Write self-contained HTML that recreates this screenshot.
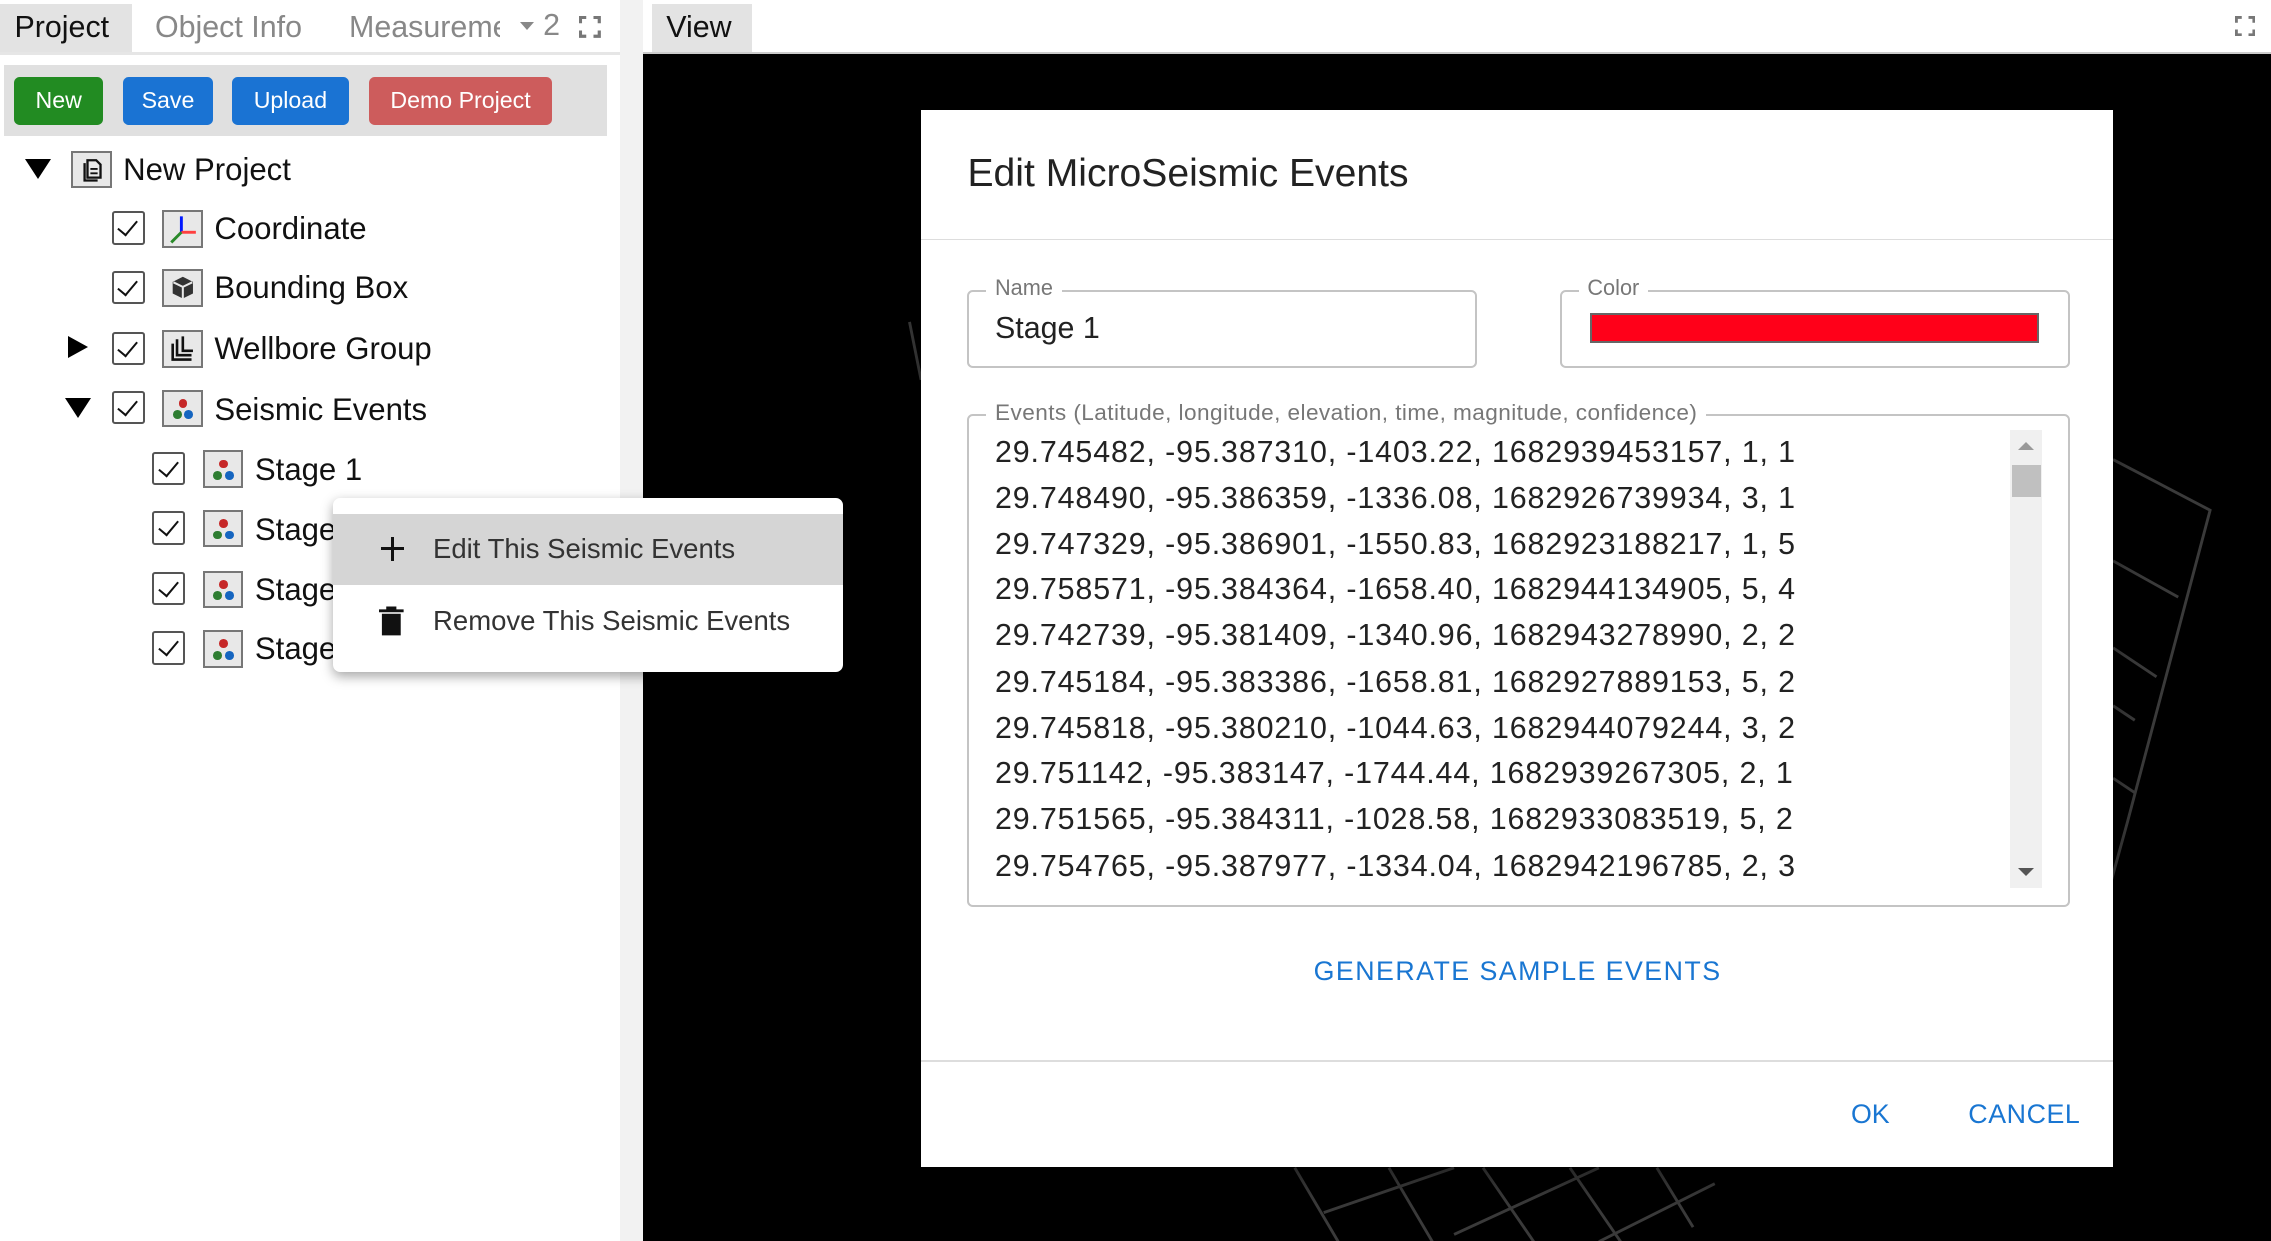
<!DOCTYPE html>
<html><head><meta charset="utf-8"><style>
*{margin:0;padding:0;box-sizing:border-box}
html,body{width:2271px;height:1241px;overflow:hidden;background:#fff}
#r{zoom:1.44834;width:1568px;height:857px;position:relative;font-family:"Liberation Sans",sans-serif;color:#111}
.a{position:absolute}
.tab{position:absolute;top:3px;height:33px;font-size:21px;line-height:33px;padding:0 10px;color:#888}
.btn{position:absolute;top:53px;height:33px;border-radius:4px;color:#fff;font-size:16px;line-height:33px;text-align:center}
.row{position:absolute;height:30px;font-size:21.5px;line-height:30px}
.cb{position:absolute;width:23px;height:23px;border:1.5px solid #555;border-radius:2px;background:#fff}
.cb:after{content:"";position:absolute;left:6px;top:2px;width:6px;height:12px;border:solid #111;border-width:0 1.8px 1.8px 0;transform:rotate(40deg)}
.ic{position:absolute;width:28px;height:26px;border:1.5px solid #777;background:#e8e8e8}
.dots i{position:absolute;width:6px;height:6px;border-radius:50%}
.ev{position:absolute;left:687px;font-size:21px;color:#222;letter-spacing:.6px}
.lbl{position:absolute;font-size:15px;color:#777;background:#fff;padding:0 6px}
.fs{position:absolute;border:1.5px solid #c4c4c4;border-radius:4px}
</style></head><body><div id="r">
<div class="a" style="left:0;top:0;width:428px;height:857px;background:#fff"></div>
<div class="a" style="left:428px;top:0;width:16px;height:857px;background:#f2f2f2"></div>
<div class="a" style="left:0;top:36px;width:428px;height:2px;background:#e6e6e6"></div>
<div class="tab" style="left:0;background:#e3e3e3;color:#111;width:91px">Project</div>
<div class="tab" style="left:97px">Object Info</div>
<div class="tab" style="left:231px;width:114px;overflow:hidden;white-space:nowrap">Measurement</div>
<div class="a" style="left:359px;top:15px;border:5px solid transparent;border-top:6px solid #888"></div>
<div class="a" style="left:375px;top:3px;font-size:21px;line-height:30px;color:#888">2</div>
<svg class="a" style="left:400px;top:11px" width="15" height="15" viewBox="0 0 15 15"><path d="M1 5V1H5M10 1H14V5M14 10V14H10M5 14H1V10" fill="none" stroke="#777" stroke-width="2.2"/></svg>
<div class="a" style="left:3px;top:45px;width:416px;height:49px;background:#e0e0e0"></div>
<div class="btn" style="left:10px;width:61px;background:#228b22">New</div>
<div class="btn" style="left:85px;width:62px;background:#1a73d3">Save</div>
<div class="btn" style="left:160px;width:81px;background:#1a73d3">Upload</div>
<div class="btn" style="left:255px;width:126px;background:#cd5c5c">Demo Project</div>
<div class="a" style="left:17px;top:110px;border:9px solid transparent;border-top:14px solid #000;border-bottom:0"></div>
<div class="ic" style="left:49px;top:104px"><svg width="26" height="24" viewBox="0 0 26 24"><path d="M10 5h6l3 3v9h-9z M8 7v12h9" fill="none" stroke="#111" stroke-width="1.6"/><path d="M12 11h5M12 14h5" stroke="#111" stroke-width="1.3"/></svg></div>
<div class="row" style="left:85px;top:102px">New Project</div>
<div class="cb" style="left:77px;top:146px"></div>
<div class="ic" style="left:112px;top:145px"><svg width="26" height="24"><path d="M12 3v11" stroke="#0018ff" stroke-width="2"/><path d="M12 14h10" stroke="#ff4040" stroke-width="2"/><path d="M12 14l-7 7" stroke="#2a8a2a" stroke-width="2"/></svg></div>
<div class="row" style="left:148px;top:143px">Coordinate</div>
<div class="cb" style="left:77px;top:187px"></div>
<div class="ic" style="left:112px;top:186px"><svg width="26" height="24"><path d="M13 4l7 3.5v8L13 19l-7-3.5v-8z" fill="#333"/><path d="M6.5 7.8L13 11l6.5-3.2M13 11v8" stroke="#e8e8e8" stroke-width="1.4" fill="none"/></svg></div>
<div class="row" style="left:148px;top:184px">Bounding Box</div>
<div class="a" style="left:47px;top:232px;border:8px solid transparent;border-left:14px solid #000;border-right:0"></div>
<div class="cb" style="left:77px;top:229px"></div>
<div class="ic" style="left:112px;top:228px"><svg width="26" height="24"><path d="M6 8v11h13M9 5v11h10M13 3v10h7" fill="none" stroke="#111" stroke-width="1.8"/></svg></div>
<div class="row" style="left:148px;top:226px">Wellbore Group</div>
<div class="a" style="left:45px;top:275px;border:9px solid transparent;border-top:14px solid #000;border-bottom:0"></div>
<div class="cb" style="left:77px;top:270px"></div>
<div class="ic dots" style="left:112px;top:269px"><i style="left:10px;top:5px;background:#c62828"></i><i style="left:6px;top:13px;background:#2e7d32"></i><i style="left:14px;top:13px;background:#1565c0"></i></div>
<div class="row" style="left:148px;top:268px">Seismic Events</div>
<div class="cb" style="left:105px;top:312px"></div>
<div class="ic dots" style="left:140px;top:311px"><i style="left:10px;top:5px;background:#c62828"></i><i style="left:6px;top:13px;background:#2e7d32"></i><i style="left:14px;top:13px;background:#1565c0"></i></div>
<div class="row" style="left:176px;top:309px">Stage 1</div>
<div class="cb" style="left:105px;top:353px"></div>
<div class="ic dots" style="left:140px;top:352px"><i style="left:10px;top:5px;background:#c62828"></i><i style="left:6px;top:13px;background:#2e7d32"></i><i style="left:14px;top:13px;background:#1565c0"></i></div>
<div class="row" style="left:176px;top:351px">Stage 2</div>
<div class="cb" style="left:105px;top:395px"></div>
<div class="ic dots" style="left:140px;top:394px"><i style="left:10px;top:5px;background:#c62828"></i><i style="left:6px;top:13px;background:#2e7d32"></i><i style="left:14px;top:13px;background:#1565c0"></i></div>
<div class="row" style="left:176px;top:392px">Stage 3</div>
<div class="cb" style="left:105px;top:436px"></div>
<div class="ic dots" style="left:140px;top:435px"><i style="left:10px;top:5px;background:#c62828"></i><i style="left:6px;top:13px;background:#2e7d32"></i><i style="left:14px;top:13px;background:#1565c0"></i></div>
<div class="row" style="left:176px;top:433px">Stage 4</div>
<div class="tab" style="left:450px;width:69px;background:#e3e3e3;color:#111">View</div>
<svg class="a" style="left:1543px;top:11px" width="14" height="14" viewBox="0 0 15 15"><path d="M1 5V1H5M10 1H14V5M14 10V14H10M5 14H1V10" fill="none" stroke="#777" stroke-width="2.2"/></svg>
<div class="a" style="left:444px;top:36px;width:1124px;height:1px;background:#ccc"></div>
<div class="a" style="left:444px;top:37px;width:1124px;height:820px;background:#000"></div>
<svg class="a" style="left:444px;top:37px" width="1124" height="820"><g stroke="#3a3a3a" stroke-width="2" fill="none">
<path d="M184 185L192 225M1015 280L1082 315L1025 530L1003 610M1015 350L1060 375M1015 410L1045 430M1015 450L1030 460M1015 500L1030 510"/>
<path d="M450 769L480 820M515 769L545 820M580 769L615 820M640 769L675 820M700 769L725 810M470 800L560 769M560 815L660 769M660 820L740 780"/></g></svg>
<div class="a" style="left:230px;top:344px;width:352px;height:120px;background:#fff;border-radius:5px;box-shadow:0 3px 8px rgba(0,0,0,.35)"></div>
<div class="a" style="left:230px;top:355px;width:352px;height:49px;background:#d5d5d5"></div>
<div class="a" style="left:263px;top:378px;width:16px;height:2px;background:#111"></div>
<div class="a" style="left:270px;top:371px;width:2px;height:16px;background:#111"></div>
<div class="a" style="left:299px;top:368px;font-size:19px;color:#333">Edit This Seismic Events</div>
<svg class="a" style="left:262px;top:418px" width="17" height="22"><path d="M0 3h17v2H0zM5 1h7v2H5zM2 6h13v15H2z" fill="#111"/></svg>
<div class="a" style="left:299px;top:418px;font-size:19px;color:#333">Remove This Seismic Events</div>
<div class="a" style="left:636px;top:76px;width:823px;height:730px;background:#fff;box-shadow:0 8px 20px rgba(0,0,0,.4)"></div>
<div class="a" style="left:668px;top:105px;font-size:27px;color:#222">Edit MicroSeismic Events</div>
<div class="a" style="left:636px;top:165px;width:823px;height:1px;background:#ddd"></div>
<div class="fs" style="left:668px;top:200px;width:352px;height:54px"></div>
<div class="lbl" style="left:681px;top:190px">Name</div>
<div class="a" style="left:687px;top:215px;font-size:21px;color:#222">Stage 1</div>
<div class="fs" style="left:1077px;top:200px;width:352px;height:54px"></div>
<div class="lbl" style="left:1090px;top:190px">Color</div>
<div class="a" style="left:1098px;top:216px;width:310px;height:21px;background:#ff0019;border:1.5px solid #666"></div>
<div class="fs" style="left:668px;top:286px;width:761px;height:340px"></div>
<div class="lbl" style="left:681px;top:276px;font-size:15.6px;letter-spacing:.3px">Events (Latitude, longitude, elevation, time, magnitude, confidence)</div>
<div class="a" style="left:1388px;top:297px;width:22px;height:316px;background:#f0f0f0"></div>
<div class="a" style="left:1389px;top:321px;width:20px;height:22px;background:#c0c0c0"></div>
<div class="a" style="left:1393px;top:305px;border:6px solid transparent;border-bottom:6px solid #999;border-top:0"></div>
<div class="a" style="left:1393px;top:599px;border:6px solid transparent;border-top:6px solid #555;border-bottom:0"></div>
<div class="ev" style="top:300px">29.745482, -95.387310, -1403.22, 1682939453157, 1, 1</div>
<div class="ev" style="top:332px">29.748490, -95.386359, -1336.08, 1682926739934, 3, 1</div>
<div class="ev" style="top:364px">29.747329, -95.386901, -1550.83, 1682923188217, 1, 5</div>
<div class="ev" style="top:395px">29.758571, -95.384364, -1658.40, 1682944134905, 5, 4</div>
<div class="ev" style="top:427px">29.742739, -95.381409, -1340.96, 1682943278990, 2, 2</div>
<div class="ev" style="top:459px">29.745184, -95.383386, -1658.81, 1682927889153, 5, 2</div>
<div class="ev" style="top:491px">29.745818, -95.380210, -1044.63, 1682944079244, 3, 2</div>
<div class="ev" style="top:522px">29.751142, -95.383147, -1744.44, 1682939267305, 2, 1</div>
<div class="ev" style="top:554px">29.751565, -95.384311, -1028.58, 1682933083519, 5, 2</div>
<div class="ev" style="top:586px">29.754765, -95.387977, -1334.04, 1682942196785, 2, 3</div>
<div class="a" style="left:907px;top:660px;font-size:18.5px;color:#1976d2;letter-spacing:1px">GENERATE SAMPLE EVENTS</div>
<div class="a" style="left:636px;top:732px;width:823px;height:1px;background:#ddd"></div>
<div class="a" style="left:1278px;top:759px;font-size:18.5px;color:#1976d2">OK</div>
<div class="a" style="left:1359px;top:759px;font-size:18.5px;color:#1976d2;letter-spacing:.4px">CANCEL</div>
</div></body></html>
